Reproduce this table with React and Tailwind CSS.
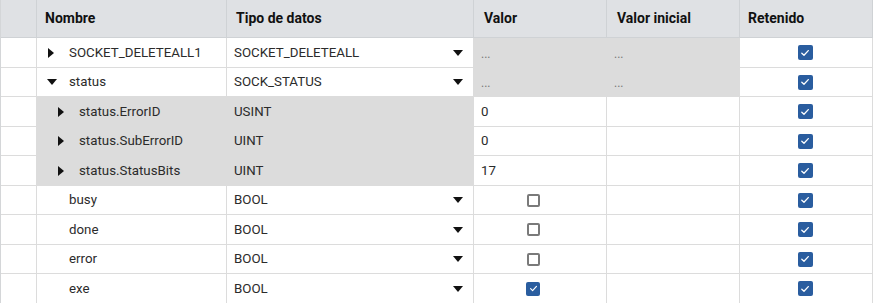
const rows = [
  { name: 'SOCKET_DELETEALL1', type: 'SOCKET_DELETEALL', level: 0, arrow: 'right', drop: true, gray: false, valor: 'dots', inicial: 'dots' },
  { name: 'status', type: 'SOCK_STATUS', level: 0, arrow: 'down', drop: true, gray: false, valor: 'dots', inicial: 'dots' },
  { name: 'status.ErrorID', type: 'USINT', level: 1, arrow: 'right', drop: false, gray: true, valor: '0' },
  { name: 'status.SubErrorID', type: 'UINT', level: 1, arrow: 'right', drop: false, gray: true, valor: '0' },
  { name: 'status.StatusBits', type: 'UINT', level: 1, arrow: 'right', drop: false, gray: true, valor: '17' },
  { name: 'busy', type: 'BOOL', level: 0, drop: true, valor: 'off' },
  { name: 'done', type: 'BOOL', level: 0, drop: true, valor: 'off' },
  { name: 'error', type: 'BOOL', level: 0, drop: true, valor: 'off' },
  { name: 'exe', type: 'BOOL', level: 0, drop: true, valor: 'on' },
];

const Tri = ({ dir }) =>
  dir === 'down' ? (
    <svg width="10" height="8" viewBox="0 0 10 8"><path d="M0 1 L10 1 L5 7 Z" fill="#111" /></svg>
  ) : (
    <svg width="8" height="10" viewBox="0 0 8 10"><path d="M1 0 L7 5 L1 10 Z" fill="#111" /></svg>
  );

const Checked = ({ size = 15 }) => (
  <div
    className="flex items-center justify-center rounded-[2px] bg-[#2a5d9f]"
    style={{ width: size, height: size }}
  >
    <svg width={size - 5} height={size - 5} viewBox="0 0 10 10">
      <path d="M1.8 5.2 L4 7.3 L8.3 2.6" fill="none" stroke="#fff" strokeWidth="1.3" strokeLinecap="round" strokeLinejoin="round" />
    </svg>
  </div>
);

const Unchecked = () => (
  <div className="w-[13px] h-[13px] rounded-[2px] border-2 border-[#7a7a7a] bg-white" />
);

const cell = 'border-r border-b border-[#dcdcdc] flex items-center';
const head = 'h-[38px] bg-[#dfe1e4] border-r border-b border-[#cfd2d5] flex items-center font-bold text-[#111] text-[14px]';

export default function App() {
  return (
    <div
      className="w-[873px] h-[303px] bg-white overflow-hidden text-[13.3px] text-[#2b2b2b]"
      style={{ fontFamily: 'Roboto, "Liberation Sans", sans-serif' }}
    >
      <div className="grid grid-cols-[36px_190px_247px_133px_133px_133px] border-l border-[#d4d6d8]">
        {/* header */}
        <div className={head} />
        <div className={`${head} pl-[8px]`}>Nombre</div>
        <div className={`${head} pl-[9px]`}>Tipo de datos</div>
        <div className={`${head} pl-[10px]`}>Valor</div>
        <div className={`${head} pl-[10px]`}>Valor inicial</div>
        <div className={`${head} pl-[8px]`}>Retenido</div>

        {rows.map((r, i) => {
          const h = i % 2 === 0 ? 'h-[30px]' : 'h-[29px]';
          const sideBg = r.gray ? 'bg-[#dcdcdc]' : 'bg-white';
          const valBg = r.valor === 'dots' ? 'bg-[#dcdcdc]' : 'bg-white';
          return (
            <div key={r.name} className="contents">
              <div className={`${cell} ${h} bg-white`} />
              <div className={`${cell} ${h} ${sideBg} ${r.level ? 'pl-[20px]' : 'pl-[10px]'}`}>
                <span className="w-[22px] flex items-center">{r.arrow && <Tri dir={r.arrow} />}</span>
                <span>{r.name}</span>
              </div>
              <div className={`${cell} ${h} ${sideBg} pl-[7px] pr-[10px] justify-between`}>
                <span>{r.type}</span>
                {r.drop && <Tri dir="down" />}
              </div>
              <div className={`${cell} ${h} ${valBg} ${r.valor === 'on' || r.valor === 'off' ? 'justify-center pr-[14px]' : 'pl-[7px]'}`}>
                {r.valor === 'dots' && <span className="text-[#777] text-[12px] pt-[2px]">...</span>}
                {r.valor === 'on' && <Checked size={14} />}
                {r.valor === 'off' && <Unchecked />}
                {r.valor !== 'dots' && r.valor !== 'on' && r.valor !== 'off' && <span>{r.valor}</span>}
              </div>
              <div className={`${cell} ${h} ${r.inicial ? 'bg-[#dcdcdc]' : 'bg-white'} pl-[7px]`}>
                {r.inicial && <span className="text-[#777] text-[12px] pt-[2px]">...</span>}
              </div>
              <div className={`${cell} ${h} bg-white justify-center pr-[2px]`}>
                <Checked />
              </div>
            </div>
          );
        })}
      </div>
    </div>
  );
}
